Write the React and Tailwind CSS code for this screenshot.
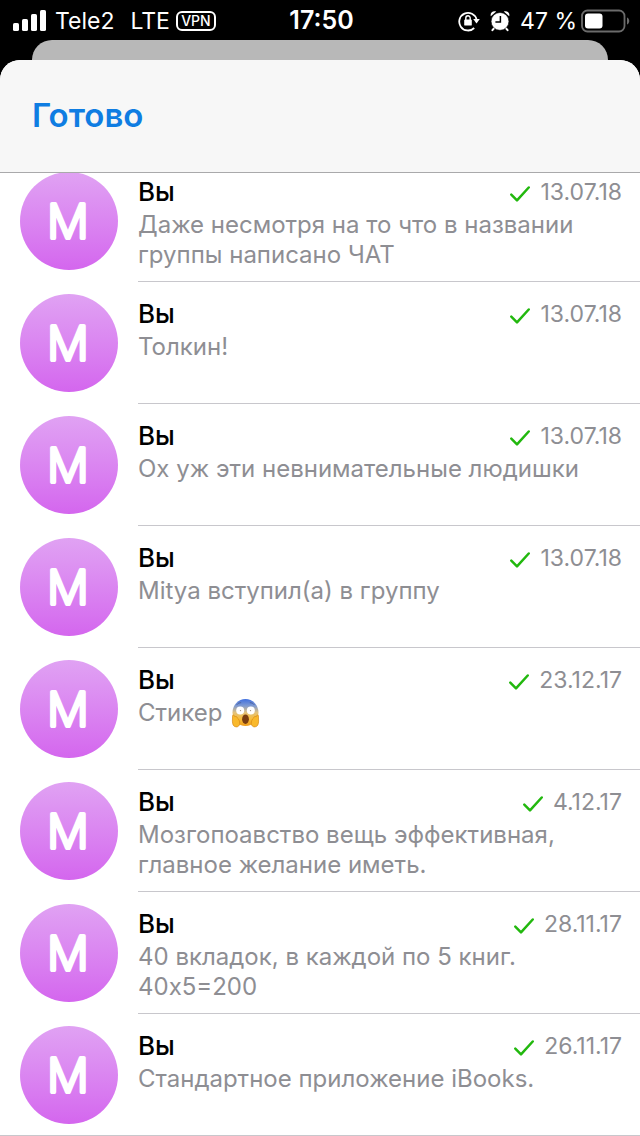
const messages = [
    { id: 1, text: 'Даже несмотря на то что в названии группы написано ЧАТ', date: '13.07.18' },
    { id: 2, text: 'Толкин!', date: '13.07.18' },
    { id: 3, text: 'Ох уж эти невнимательные людишки', date: '13.07.18' },
    { id: 4, text: 'Mitya вступил(а) в группу', date: '13.07.18' },
    { id: 5, text: 'Стикер', date: '23.12.17', sticker: true },
    { id: 6, text: 'Мозгопоавство вещь эффективная, главное желание иметь.', date: '4.12.17' },
    { id: 7, text: '40 вкладок, в каждой по 5 книг. 40x5=200', date: '28.11.17' },
    { id: 8, text: 'Стандартное приложение iBooks.', date: '26.11.17' },
];

function SignalIcon() {
    return (
        <svg viewBox="0 0 34 22" className="h-[22px] w-[34px]" fill="#fff" aria-hidden="true">
            <rect x="0" y="13" width="6" height="8" rx="1.6" />
            <rect x="9" y="9" width="6" height="12" rx="1.6" />
            <rect x="18" y="4" width="6" height="17" rx="1.6" />
            <rect x="27" y="0" width="6" height="21" rx="1.6" />
        </svg>
    );
}

function RotationLockIcon() {
    return (
        <svg viewBox="0 0 22 22" className="h-[22px] w-[22px]" fill="none" aria-hidden="true">
            <path d="M16.2 18A8.8 8.8 0 1 1 18.6 9.6" stroke="#fff" strokeWidth="1.8" />
            <path d="M15.2 9h6.6l-3.3 4.6z" fill="#fff" />
            <rect x="6.2" y="9.6" width="7.6" height="6" rx="0.9" fill="#fff" />
            <path d="M7.8 10V8a2.2 2.2 0 0 1 4.4 0V10" stroke="#fff" strokeWidth="1.4" />
        </svg>
    );
}

function AlarmIcon() {
    return (
        <svg viewBox="0 0 20 22" className="h-[22px] w-5" aria-hidden="true">
            <path d="M0.8 6.2C-.2 3 3 .2 6.2 1.6zM19.2 6.2C20.2 3 17 .2 13.8 1.6z" fill="#fff" />
            <path d="M4.4 17.8l-2 2.4M15.6 17.8l2 2.4" stroke="#fff" strokeWidth="2" strokeLinecap="round" />
            <circle cx="10" cy="11.4" r="8.9" fill="#fff" stroke="#000" strokeWidth="0.6" />
            <path d="M10.4 6v6H5.4" stroke="#000" strokeWidth="1.5" fill="none" />
        </svg>
    );
}

function BatteryIcon() {
    return (
        <svg viewBox="0 0 49 24" className="h-6 w-[49px]" aria-hidden="true">
            <rect x="1" y="1.5" width="42.5" height="21" rx="5.5" fill="none" stroke="#6b6b6b" strokeWidth="1.8" />
            <rect x="4" y="4.5" width="17.5" height="15" rx="3" fill="#fff" />
            <path d="M46 8.5c3 1.2 3 5.8 0 7z" fill="#6b6b6b" />
        </svg>
    );
}

function CheckIcon() {
    return (
        <svg viewBox="0 0 20 16" className="mt-1 h-4 w-5" fill="none" aria-hidden="true">
            <path d="M1.3 8.6L7 14.3 18.7 1.5" stroke="#22b80e" strokeWidth="2.5" strokeLinecap="round" strokeLinejoin="round" />
        </svg>
    );
}

function ScreamEmoji() {
    return (
        <svg viewBox="0 0 30 32" role="img" aria-label="Крик" className="h-8 w-[30px]">
            <defs>
                <linearGradient id="scream-face" x1="0" y1="0" x2="0" y2="1">
                    <stop offset="0" stopColor="#3f6fe0" />
                    <stop offset="0.25" stopColor="#7f9ad2" />
                    <stop offset="0.5" stopColor="#e3c27c" />
                    <stop offset="0.75" stopColor="#f8bd38" />
                    <stop offset="1" stopColor="#ee9c1c" />
                </linearGradient>
            </defs>
            <ellipse cx="15.5" cy="15.5" rx="13" ry="13.6" fill="url(#scream-face)" />
            <path d="M7 7.5c1-1.2 2.3-1.8 3.8-1.8M24 7.5c-1-1.2-2.3-1.8-3.8-1.8" stroke="#4a5f9a" strokeWidth="0.9" fill="none" strokeLinecap="round" />
            <circle cx="10.2" cy="13.6" r="4" fill="#fff" />
            <circle cx="20.8" cy="13.6" r="4" fill="#fff" />
            <circle cx="10.5" cy="13.6" r="0.7" fill="#a09080" />
            <circle cx="20.5" cy="13.6" r="0.7" fill="#a09080" />
            <ellipse cx="15.5" cy="22.2" rx="3.4" ry="4.8" fill="#7a3d10" />
            <path d="M2.6 18.5c1.3-.8 2 .1 2.3 1.4.9-.9 2-.4 2.3.8 1.5 1 2.7 3.6 2.5 6-.2 2-1.6 3.3-3.6 3.2-3-.2-3.6-3-3.7-5.8z" fill="#f9b92c" stroke="#d98a14" strokeWidth="0.7" />
            <path d="M28.4 18.5c-1.3-.8-2 .1-2.3 1.4-.9-.9-2-.4-2.3.8-1.5 1-2.7 3.6-2.5 6 .2 2 1.6 3.3 3.6 3.2 3-.2 3.6-3 3.7-5.8z" fill="#f9b92c" stroke="#d98a14" strokeWidth="0.7" />
        </svg>
    );
}

function Avatar({ letter }) {
    return (
        <div className="mt-3 size-[98px] shrink-0 rounded-full bg-linear-to-b from-[#e0a2f3] to-[#d466ee]">
            <svg viewBox="0 0 98 98" className="size-full">
                {/* a thin letter with a thick round stroke gives it soft ends */}
                <text
                    x="48"
                    y="66"
                    textAnchor="middle"
                    className="text-[46px] font-extralight"
                    fill="#fff"
                    stroke="#fff"
                    strokeWidth="4"
                    strokeLinejoin="round"
                >
                    {letter}
                </text>
            </svg>
        </div>
    );
}

function StatusBar() {
    return (
        <div className="grid h-10 grid-cols-[1fr_auto_1fr] items-center pt-0.5 pr-[10px] pl-[13px] text-[23px] text-white">
            <div className="flex items-center">
                <SignalIcon />
                <span className="ml-2">Tele2</span>
                <span className="ml-4">LTE</span>
                <span className="ml-1.5 flex h-5 w-10 items-center justify-center rounded-md border-2 border-white text-sm font-medium">
                    VPN
                </span>
            </div>
            <span className="text-[25px] font-semibold">17:50</span>
            <div className="flex items-center justify-end">
                <RotationLockIcon />
                <span className="ml-2.5">
                    <AlarmIcon />
                </span>
                <span className="mr-1 ml-2.5">47 %</span>
                <BatteryIcon />
            </div>
        </div>
    );
}

function MessageRow({ message }) {
    return (
        <li className="group flex gap-5 border-[#c8c7cc] pl-5 last:border-b">
            <Avatar letter="M" />
            <div className="min-h-[122px] min-w-0 flex-1 border-b border-[#c8c7cc] pt-4 pr-[18px] group-last:min-h-[121px] group-last:border-b-0">
                <div className="flex h-8 items-center">
                    <h2 className="flex-1 text-[26px] leading-8 font-medium text-black">Вы</h2>
                    <CheckIcon />
                    <time className="ml-2.5 text-[23px] leading-8 text-[#8e8e93]">{message.date}</time>
                </div>
                <p className="mt-0.5 pr-6 text-2xl leading-[30px] text-[#8e8e93]">
                    {message.text}
                    {message.sticker && (
                        <span className="ml-2 inline-flex h-[30px] items-center align-top">
                            <ScreamEmoji />
                        </span>
                    )}
                </p>
            </div>
        </li>
    );
}

export default function App() {
    return (
        <div className="min-h-screen overflow-hidden bg-black font-['Inter','Noto_Sans',sans-serif]">
            <StatusBar />
            <div className="mx-8 h-5 rounded-t-[20px] bg-[#b8b8b8]" />
            <main className="overflow-hidden rounded-t-[20px] bg-white">
                <header className="relative z-10 flex h-[113px] items-center border-b border-[#a9a9ab] bg-[#f7f7f7] px-8">
                    <button type="button" className="text-[33px] font-semibold text-[#0f7de2]">
                        Готово
                    </button>
                </header>
                {/* the list is scrolled a little way under the header */}
                <ul className="-mt-[13px]">
                    {messages.map((message) => (
                        <MessageRow key={message.id} message={message} />
                    ))}
                </ul>
            </main>
        </div>
    );
}
